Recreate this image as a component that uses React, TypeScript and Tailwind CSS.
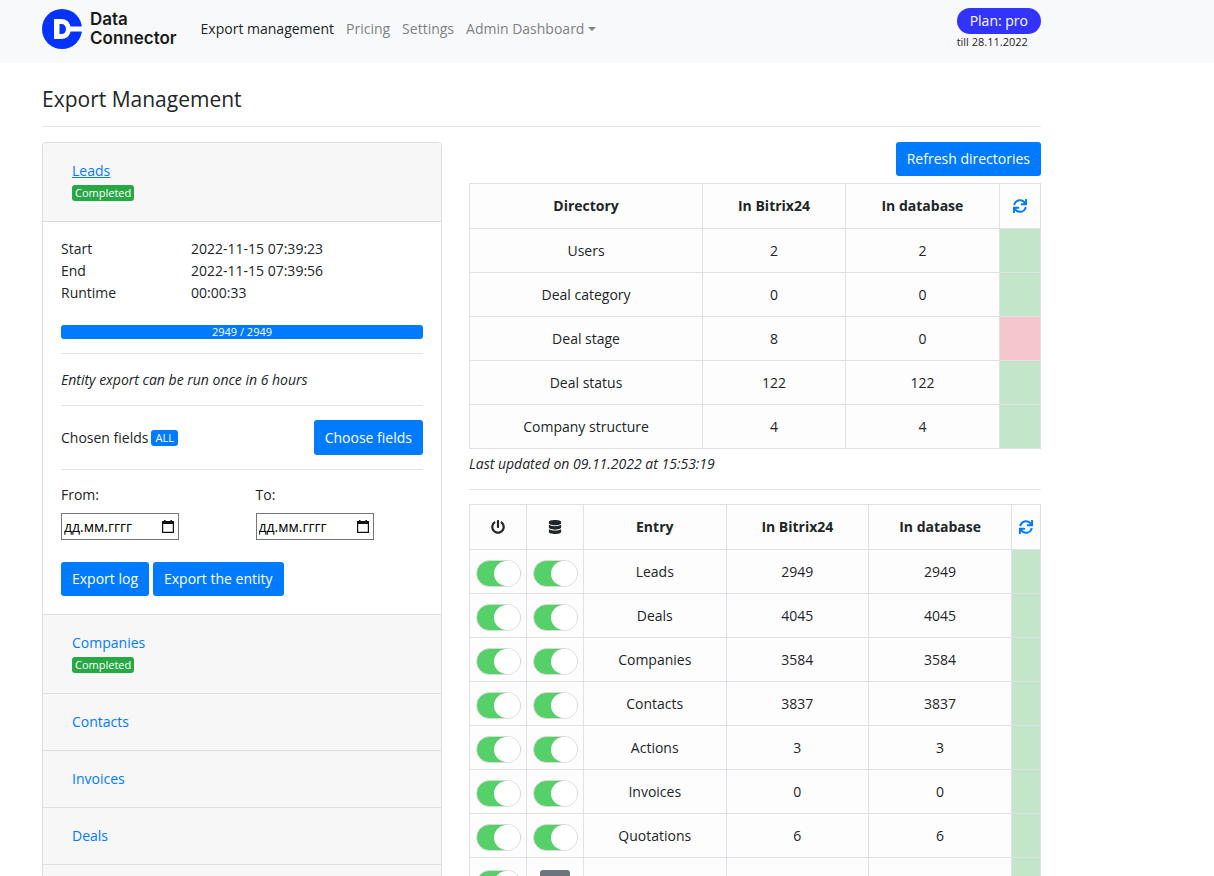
import { useState } from "react"
import { FaDatabase, FaPowerOff, FaSync } from "react-icons/fa"

interface DirectoryRow {
    name: string
    bitrix: number
    database: number
    synced: boolean
}

interface EntryRow {
    name: string
    bitrix: number
    database: number
}

const directories: DirectoryRow[] = [
    { name: "Users", bitrix: 2, database: 2, synced: true },
    { name: "Deal category", bitrix: 0, database: 0, synced: true },
    { name: "Deal stage", bitrix: 8, database: 0, synced: false },
    { name: "Deal status", bitrix: 122, database: 122, synced: true },
    { name: "Company structure", bitrix: 4, database: 4, synced: true }
]

const entries: EntryRow[] = [
    { name: "Leads", bitrix: 2949, database: 2949 },
    { name: "Deals", bitrix: 4045, database: 4045 },
    { name: "Companies", bitrix: 3584, database: 3584 },
    { name: "Contacts", bitrix: 3837, database: 3837 },
    { name: "Actions", bitrix: 3, database: 3 },
    { name: "Invoices", bitrix: 0, database: 0 },
    { name: "Quotations", bitrix: 6, database: 6 }
]

const cell = "border border-[#dee2e6] p-0 text-center"
const button = "rounded-[3px] bg-[#007bff] px-[11px] text-white cursor-pointer"

function Logo() {
    return (
        <a href="#" className="flex items-center gap-2">
            <svg viewBox="0 0 40 40" className="w-10 h-10">
                <circle cx="20" cy="20" r="20" fill="#0433ff" />
                <path fill="#fff" fillRule="evenodd" d="M12 10h7.500c4.700 0 8 2.900 9 7.500H40v5H28.500c-1 4.600-4.300 7.500-9 7.500H12zM17.500 15v10H19.500c2.700 0 4.500-2 4.500-5s-1.800-5-4.500-5z" />
            </svg>
            <span className="font-['Inter'] font-semibold text-[17px] leading-[19px] text-[#1a1a1a]">
                <span className="block">Data</span>
                <span className="block">Connector</span>
            </span>
        </a>
    )
}

function Navbar() {
    return (
        <header className="bg-[#f8f9fb]">
            <div className="ml-[42px] mr-4 max-w-[999px] h-[63px] flex items-center justify-between">
                <div className="flex items-center gap-6 pb-[6px]">
                    <Logo />
                    <nav className="flex gap-3 text-[#808182]">
                        <a href="#" className="text-[#212529]">Export management</a>
                        <a href="#">Pricing</a>
                        <a href="#">Settings</a>
                        <a href="#" className="flex items-center gap-1">
                            Admin Dashboard
                            <svg viewBox="0 0 8 4" className="w-2 h-1"><path d="M0 0h8L4 4z" fill="currentColor" /></svg>
                        </a>
                    </nav>
                </div>
                <div className="pb-[6px]">
                    <div className="rounded-full bg-[#3333ff] text-white h-[26px] leading-[26px] px-[13px]">Plan: pro</div>
                    <div className="text-[11px] leading-4">till 28.11.2022</div>
                </div>
            </div>
        </header>
    )
}

function SectionHeader({ title, completed, active }: { title: string, completed?: boolean, active?: boolean }) {
    return (
        <div className="bg-[#f7f7f7] px-[29px] py-[17px] min-h-14">
            <a href="#" className={`block w-fit leading-[22px] text-[#007bff] ${active ? "underline" : ""}`}>{title}</a>
            {completed && <span className="block w-fit my-[3px] h-4 rounded-[3px] bg-[#28a745] px-[3px] text-[11px] leading-4 text-white">Completed</span>}
        </div>
    )
}

function DateField({ id, label }: { id: string, label: string }) {
    const [value, setValue] = useState<string>("")
    return (
        <div>
            <label htmlFor={id} className="block mb-[7px]">{label}</label>
            <div className="relative w-[118px]">
                <input
                    id={id}
                    type="text"
                    value={value}
                    onChange={(e) => setValue(e.target.value)}
                    placeholder="дд.мм.гггг"
                    className="w-full h-[27px] border border-[#767676] bg-white px-[2px] placeholder:text-black"
                />
                <svg viewBox="0 0 12 13" className="absolute right-[5px] top-[7px] w-3 h-[13px]" fill="#111">
                    <path d="M2 0h1.500v1h5V0H10v1h2v12H0V1h2zM1.200 4v7.800h9.600V4z" fillRule="evenodd" />
                </svg>
            </div>
        </div>
    )
}

function ExportPanel() {
    return (
        <div className="border border-[#dfdfdf] rounded-[4px] divide-y divide-[#dfdfdf] overflow-hidden">
            <SectionHeader title="Leads" completed active />
            <div className="px-[18px] pt-4 pb-[18px]">
                <dl className="grid grid-cols-[130px_1fr] leading-[22px]">
                    <dt>Start</dt><dd>2022-11-15 07:39:23</dd>
                    <dt>End</dt><dd>2022-11-15 07:39:56</dd>
                    <dt>Runtime</dt><dd>00:00:33</dd>
                </dl>
                <div className="mt-[21px] h-[14px] rounded-[3px] bg-[#007bff] text-center text-[11px] leading-[14px] text-white">2949 / 2949</div>
                <hr className="my-[14px] border-[#e5e5e5]" />
                <p className="italic pt-px">Entity export can be run once in 6 hours</p>
                <hr className="my-[14px] border-[#e5e5e5]" />
                <div className="flex items-center justify-between">
                    <div className="flex items-center gap-[3px]">
                        Chosen fields
                        <span className="rounded-[3px] h-4 bg-[#007bff] px-1 text-[11px] leading-4 text-white">ALL</span>
                    </div>
                    <button className={`${button} h-[35px]`}>Choose fields</button>
                </div>
                <hr className="my-[14px] border-[#e5e5e5]" />
                <div className="grid grid-cols-2 gap-[27px]">
                    <DateField id="from" label="From:" />
                    <DateField id="to" label="To:" />
                </div>
                <div className="flex gap-1 mt-[22px]">
                    <button className={`${button} h-[34px]`}>Export log</button>
                    <button className={`${button} h-[34px]`}>Export the entity</button>
                </div>
            </div>
            <SectionHeader title="Companies" completed />
            <SectionHeader title="Contacts" />
            <SectionHeader title="Invoices" />
            <SectionHeader title="Deals" />
            <SectionHeader title="" />
        </div>
    )
}

function Toggle({ label }: { label: string }) {
    const [on, setOn] = useState<boolean>(true)
    return (
        <label className={`mt-1 ml-[6px] flex w-[45px] h-[27px] rounded-full border border-[#d9d9d9] cursor-pointer ${on ? "bg-[linear-gradient(to_right,#56d068_65%,white_65%)] justify-end" : "bg-white justify-start"}`}>
            <input type="checkbox" aria-label={label} checked={on} onChange={() => setOn(!on)} className="sr-only" />
            <span className="w-[26px] h-[25px] rounded-full bg-white" />
        </label>
    )
}

function RefreshButton({ label }: { label: string }) {
    return (
        <button aria-label={label} className="block mx-auto text-[#007bff] cursor-pointer">
            <FaSync size={14} />
        </button>
    )
}

function DirectoryTable() {
    return (
        <table className="w-full table-fixed border-collapse bg-[#fdfdfd]">
            <thead>
                <tr className="h-[45px]">
                    <th className={cell}>Directory</th>
                    <th className={`${cell} w-1/4`}>In Bitrix24</th>
                    <th className={`${cell} w-[27%]`}>In database</th>
                    <th className={`${cell} w-[41px]`}><RefreshButton label="Refresh directory counts" /></th>
                </tr>
            </thead>
            <tbody>
                {directories.map((row) => (
                    <tr key={row.name} className="h-11">
                        <td className={cell}>{row.name}</td>
                        <td className={cell}>{row.bitrix}</td>
                        <td className={cell}>{row.database}</td>
                        <td className={`${cell} ${row.synced ? "bg-[#c3e6cb]" : "bg-[#f5c6cb]"}`}></td>
                    </tr>
                ))}
            </tbody>
        </table>
    )
}

function EntryTable() {
    return (
        <table className="w-full table-fixed border-collapse bg-[#fdfdfd]">
            <thead>
                <tr className="h-[45px]">
                    <th className={`${cell} w-[57px]`}><FaPowerOff size={14} className="mx-auto" /></th>
                    <th className={`${cell} w-[57px]`}><FaDatabase size={14} className="mx-auto" /></th>
                    <th className={cell}>Entry</th>
                    <th className={`${cell} w-1/4`}>In Bitrix24</th>
                    <th className={`${cell} w-1/4`}>In database</th>
                    <th className={`${cell} w-[29px]`}><RefreshButton label="Refresh entry counts" /></th>
                </tr>
            </thead>
            <tbody>
                {entries.map((row) => (
                    <tr key={row.name} className="h-11">
                        <td className={cell}><Toggle label={`${row.name} export`} /></td>
                        <td className={cell}><Toggle label={`${row.name} storage`} /></td>
                        <td className={cell}>{row.name}</td>
                        <td className={cell}>{row.bitrix}</td>
                        <td className={cell}>{row.database}</td>
                        <td className={`${cell} bg-[#c3e6cb]`}></td>
                    </tr>
                ))}
                <tr className="h-[52px]">
                    <td className={`${cell} align-top pt-2`}><Toggle label="Export" /></td>
                    <td className={`${cell} align-top pt-3`}>
                        <button aria-label="Storage" className="block mx-auto w-[30px] h-[30px] rounded-[3px] bg-[#6c757d]" />
                    </td>
                    <td className={cell}></td>
                    <td className={cell}></td>
                    <td className={cell}></td>
                    <td className={`${cell} bg-[#c3e6cb]`}></td>
                </tr>
            </tbody>
        </table>
    )
}

export default function App() {
    return (
        <div className="min-h-screen bg-white font-['Open_Sans','Noto_Sans',sans-serif] text-[14px] leading-[22px] text-[#212529]">
            <Navbar />
            <main className="ml-[42px] mr-4 max-w-[999px] pt-[23px]">
                <h1 className="text-[21px] leading-[26px] font-medium">Export Management</h1>
                <hr className="mt-[14px] mb-[15px] border-[#e5e5e5]" />
                <div className="grid grid-cols-[400fr_572fr] gap-[27px] items-start">
                    <ExportPanel />
                    <div>
                        <div className="flex justify-end mb-[7px]">
                            <button className={`${button} h-[34px]`}>Refresh directories</button>
                        </div>
                        <DirectoryTable />
                        <p className="italic mt-1">Last updated on 09.11.2022 at 15:53:19</p>
                        <hr className="my-[14px] border-[#e5e5e5]" />
                        <EntryTable />
                    </div>
                </div>
            </main>
        </div>
    )
}
